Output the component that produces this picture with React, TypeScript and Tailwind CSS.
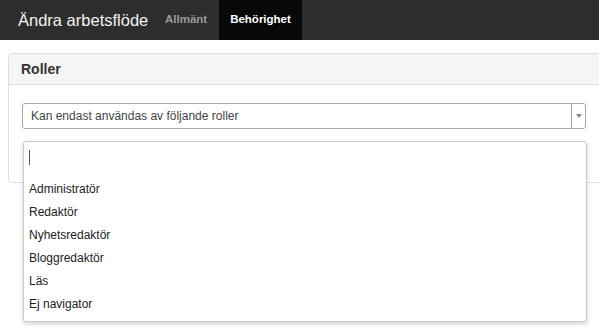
import React from "react";

const roles = [
  "Administratör",
  "Redaktör",
  "Nyhetsredaktör",
  "Bloggredaktör",
  "Läs",
  "Ej navigator",
];

export default function App() {
  return (
    <div className="w-[599px] h-[330px] overflow-hidden bg-white text-[#333] font-['Liberation_Sans',Arial,sans-serif]">
      {/* Top bar */}
      <div className="h-[40px] bg-[#2d2d2d] flex items-stretch">
        <div className="w-[165px] pl-[18px] flex items-center text-[16.5px] text-[#f2f2f2]">
          Ändra arbetsflöde
        </div>
        <div className="w-[54px] flex items-center text-[11.5px] font-bold text-[#9a9a9a]">
          Allmänt
        </div>
        <div className="w-[83px] bg-[#080808] flex items-center justify-center text-[11.5px] font-bold text-white">
          Behörighet
        </div>
      </div>

      {/* Panel */}
      <div className="relative mt-[13px] ml-[8px] w-[620px] h-[130px] border border-[#dddddd] rounded-[4px]">
        <div className="h-[31px] bg-[#f5f5f5] border-b border-[#dddddd] rounded-t-[4px] pl-[12px] flex items-center text-[14px] font-bold text-[#333]">
          Roller
        </div>
        <div className="pt-[18px] pl-[13px]">
          <div className="w-[564px] h-[26px] border border-[#aaaaaa] rounded-[3px] bg-white flex items-stretch">
            <div className="flex-1 pl-[8px] flex items-center text-[12px] text-[#444]">
              Kan endast användas av följande roller
            </div>
            <div className="w-[14px] border-l border-[#aaaaaa] flex items-center justify-center">
              <svg width="6" height="4" viewBox="0 0 6 4">
                <path d="M0 0 L6 0 L3 4 Z" fill="#888" />
              </svg>
            </div>
          </div>
        </div>

        {/* Dropdown */}
        <div className="absolute left-[14px] top-[87px] w-[564px] h-[181px] bg-white border border-[#cccccc] rounded-[3px] shadow-[0_2px_4px_rgba(0,0,0,0.18)]">
          <div className="h-[28px] mx-[3px] mt-[1px] flex items-center pl-[2px]">
            <div className="w-[1px] h-[15px] bg-[#555]" />
          </div>
          <div className="pt-[6px]">
            {roles.map((r) => (
              <div key={r} className="h-[23px] pl-[5px] flex items-center text-[12px] text-[#222]">
                {r}
              </div>
            ))}
          </div>
        </div>
      </div>
    </div>
  );
}
